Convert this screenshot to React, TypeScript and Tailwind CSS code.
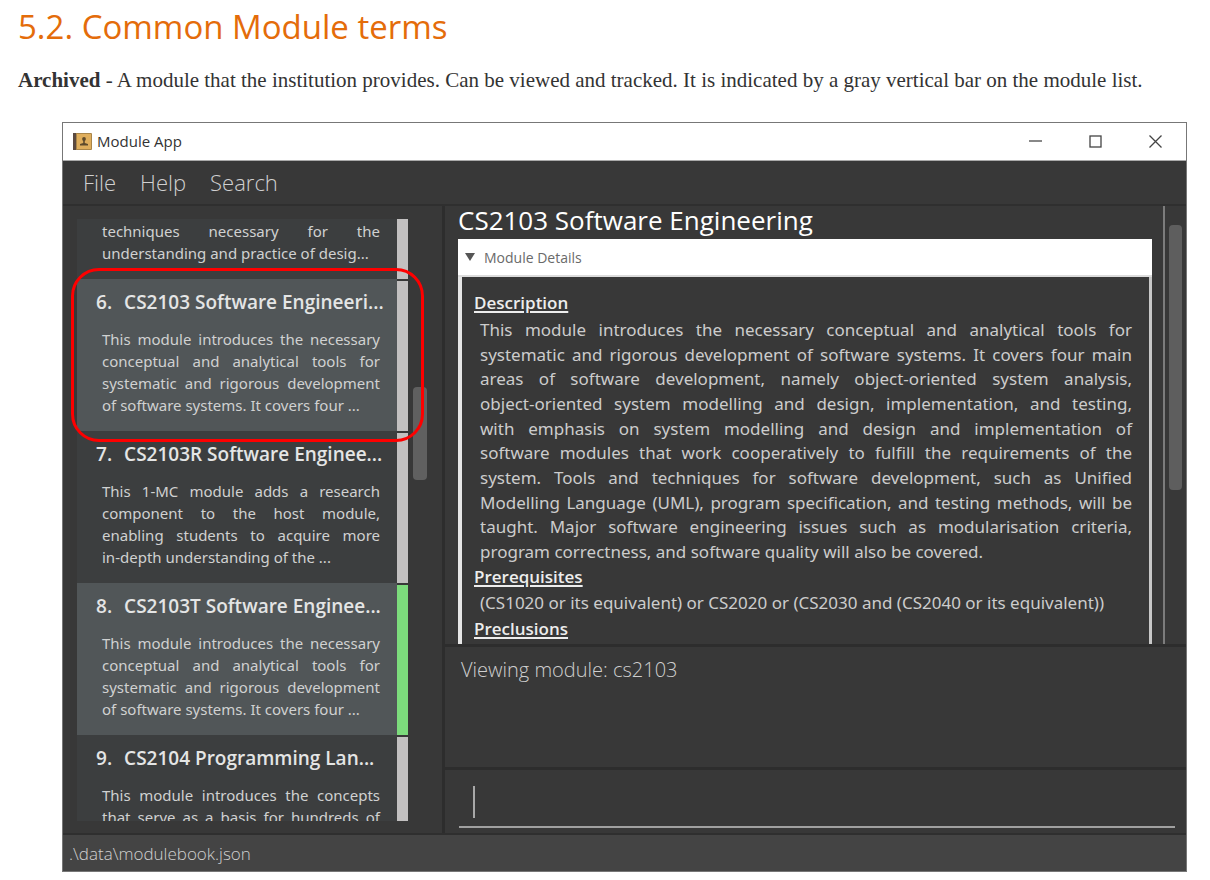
type Module = { index: number; title: string; lines: string[]; tracked?: boolean };

const modules: Module[] = [
  {
    index: 6,
    title: "CS2103 Software Engineeri...",
    lines: [
      "This module introduces the necessary",
      "conceptual and analytical tools for",
      "systematic and rigorous development",
      "of software systems. It covers four ...",
    ],
  },
  {
    index: 7,
    title: "CS2103R Software Enginee...",
    lines: [
      "This 1-MC module adds a research",
      "component to the host module,",
      "enabling students to acquire more",
      "in-depth understanding of the ...",
    ],
  },
  {
    index: 8,
    title: "CS2103T Software Enginee...",
    tracked: true,
    lines: [
      "This module introduces the necessary",
      "conceptual and analytical tools for",
      "systematic and rigorous development",
      "of software systems. It covers four ...",
    ],
  },
  {
    index: 9,
    title: "CS2104 Programming Lan...",
    lines: ["This module introduces the concepts", "that serve as a basis for hundreds of"],
  },
];

const description = [
  "This module introduces the necessary conceptual and analytical tools for",
  "systematic and rigorous development of software systems. It covers four main",
  "areas of software development, namely object-oriented system analysis,",
  "object-oriented system modelling and design, implementation, and testing,",
  "with emphasis on system modelling and design and implementation of",
  "software modules that work cooperatively to fulfill the requirements of the",
  "system. Tools and techniques for software development, such as Unified",
  "Modelling Language (UML), program specification, and testing methods, will be",
  "taught. Major software engineering issues such as modularisation criteria,",
  "program correctness, and software quality will also be covered.",
];

function Line({ text, justified }: { text: string; justified: boolean }) {
  return (
    <span className={justified ? "block whitespace-nowrap [text-align-last:justify]" : "block whitespace-nowrap"}>
      {text}
    </span>
  );
}

function CardText({ lines, lastJustified = false }: { lines: string[]; lastJustified?: boolean }) {
  return (
    <p className="pr-[17px] pl-[25px] font-['Noto_Sans',sans-serif] text-[15px] leading-[22px] text-[#d0d1d1]">
      {lines.map((line, i) => (
        <Line key={line} text={line} justified={lastJustified || i < lines.length - 1} />
      ))}
    </p>
  );
}

function ModuleCard({ module }: { module: Module }) {
  const even = module.index % 2 === 0;
  return (
    <li className="flex h-[152px] shrink-0">
      <div className={even ? "min-w-0 flex-1 bg-[#515658] pt-[11px]" : "min-w-0 flex-1 bg-[#3c3e3f] pt-[11px]"}>
        <h3 className="flex gap-3 pl-[19px] text-[19px] leading-6 font-semibold whitespace-nowrap text-[#e4e5e5]">
          <span>{module.index}.</span>
          <span>{module.title}</span>
        </h3>
        <div className="pt-3.5">
          <CardText lines={module.lines} lastJustified={module.lines.length < 4} />
        </div>
      </div>
      <div className={module.tracked ? "mt-0.5 w-[11px] bg-[#7cdb7c]" : "mt-0.5 w-[11px] bg-[#c2c0c0]"} />
    </li>
  );
}

function AppIcon() {
  return (
    <svg viewBox="0 0 19 17" className="h-[17px] w-[19px]" aria-hidden="true">
      <rect width="19" height="17" rx="1" fill="#a98549" />
      <rect x="4" y="1" width="14" height="15" fill="#dfae5d" />
      <rect width="3" height="17" fill="#5b4a40" />
      <circle cx="11" cy="6" r="1.9" fill="#5e4a2c" />
      <path d="M10.200 7h1.600v3l3.200 1V12.500H7v-1.500l3.200-1z" fill="#5e4a2c" />
    </svg>
  );
}

function ListPane() {
  return (
    <aside className="flex w-[379px] shrink-0 gap-[5px] pt-[13px] pb-3 pl-[14px]">
      <div className="relative w-[331px]">
        <ul className="flex h-[602px] flex-col overflow-hidden">
          <li className="flex h-[60px] shrink-0">
            <div className="min-w-0 flex-1 bg-[#3c3e3f] pt-px">
              <CardText lines={["techniques necessary for the", "understanding and practice of desig..."]} />
            </div>
            <div className="w-[11px] bg-[#c2c0c0]" />
          </li>
          {modules.map((m) => (
            <ModuleCard key={m.index} module={m} />
          ))}
        </ul>
        <div className="pointer-events-none absolute top-[49px] -right-4 -left-1.5 h-[174px] rounded-[28px] border-[3px] border-[#fe0000]" />
      </div>
      <div className="pt-[168px]">
        <div className="h-[93px] w-[14px] rounded-[4px] bg-[#606060]" />
      </div>
    </aside>
  );
}

function SectionHeading({ children }: { children: string }) {
  return (
    <h4 className="text-[17px] leading-[26px] font-semibold text-[#ededed] underline decoration-2 underline-offset-2">
      {children}
    </h4>
  );
}

function DetailsPane() {
  return (
    <section className="flex h-[438px] gap-1 pr-1 pl-[13px]">
      <div className="min-w-0 flex-1 border-r-2 border-[#7c7c7c] pr-[11px]">
        <h2 className="pb-[5px] text-[26px] leading-7 font-medium text-white">CS2103 Software Engineering</h2>
        <button
          type="button"
          className="flex h-[38px] w-full items-center gap-[9px] border-b-2 border-[#dcdcdc] bg-white pl-[7px] text-[14px] text-[#6a6a6a]"
        >
          <svg viewBox="0 0 10 8" className="h-2 w-[10px]" aria-hidden="true">
            <path d="M0 0h10L5 8z" fill="#555" />
          </svg>
          Module Details
        </button>
        <div className="h-[367px] overflow-hidden border-r-[3px] border-l-4 border-r-[#c8c8c8] border-l-[#e6e6e6] pt-[13px] pr-[17px] pl-3">
          <SectionHeading>Description</SectionHeading>
          <p className="flex h-[248px] flex-col justify-between pt-0.5 pl-1.5 font-['Noto_Sans',sans-serif] text-[17px] leading-6 text-[#cccccc]">
            {description.map((line, i) => (
              <Line key={line} text={line} justified={i < description.length - 1} />
            ))}
          </p>
          <SectionHeading>Prerequisites</SectionHeading>
          <p className="pl-1.5 font-['Noto_Sans',sans-serif] text-[17px] leading-[26px] whitespace-nowrap text-[#cccccc]">
            (CS1020 or its equivalent) or CS2020 or (CS2030 and (CS2040 or its equivalent))
          </p>
          <SectionHeading>Preclusions</SectionHeading>
        </div>
      </div>
      <div className="pt-[19px]">
        <div className="h-[265px] w-[13px] rounded-[4px] bg-[#5e5e5e]" />
      </div>
    </section>
  );
}

export default function App() {
  return (
    <main className="min-h-screen bg-white pb-2 font-['Open_Sans',sans-serif]">
      <header className="px-[18px]">
        <h1 className="pt-1 text-[33px] leading-[46px] text-[#e46c0a]">5.2. Common Module terms</h1>
        <p className="pt-[17px] font-['Liberation_Serif',serif] text-[21px] leading-[27px] text-[#333]">
          <strong>Archived</strong> - A module that the institution provides. Can be viewed and tracked. It is
          indicated by a gray vertical bar on the module list.
        </p>
      </header>

      <div className="mt-7 mr-[23px] ml-[62px] border border-[#777] bg-[#383838]">
        <div className="flex h-[38px] items-center gap-[5px] border-b border-[#aaa] bg-white pl-[10px]">
          <AppIcon />
          <span className="flex-1 text-[15px] text-[#333]">Module App</span>
          <div className="flex pr-[1px] text-[#444]">
            <button type="button" aria-label="Minimize" className="flex h-9 w-[59px] items-center justify-center">
              <svg viewBox="0 0 13 13" className="size-[13px]"><path d="M0 6h13" stroke="#888" strokeWidth="2" /></svg>
            </button>
            <button type="button" aria-label="Maximize" className="flex h-9 w-[60px] items-center justify-center">
              <svg viewBox="0 0 13 13" className="size-[13px]" fill="none"><rect x="1" y="1" width="11" height="11" stroke="#444" strokeWidth="1.300" /></svg>
            </button>
            <button type="button" aria-label="Close" className="flex h-9 w-[60px] items-center justify-center">
              <svg viewBox="0 0 13 13" className="size-[13px]"><path d="M.5.5l12 12M12.500.5l-12 12" stroke="#444" strokeWidth="1.300" /></svg>
            </button>
          </div>
        </div>

        <nav className="flex h-[43px] items-center gap-6 pl-5 text-[22px] font-light text-[#d0d0d0]">
          <button type="button">File</button>
          <button type="button">Help</button>
          <button type="button">Search</button>
        </nav>

        <div className="flex border-y-2 border-[#2f2f2f]">
          <ListPane />
          <div className="min-w-0 flex-1 border-l-[3px] border-[#2d2d2d]">
            <DetailsPane />
            <div className="h-[126px] border-y-[3px] border-[#2d2d2d] px-4 pt-[7px] text-[20px] leading-8 font-light text-[#cfcfcf]">
              Viewing module: cs2103
            </div>
            <div className="pt-3 pr-[11px] pl-[14px]">
              <label className="flex h-[46px] items-start border-b-2 border-[#a0a0a0] pl-[14px]">
                <span className="mt-1 h-8 w-0.5 bg-[#a8a8a8]" />
                <input
                  aria-label="Command"
                  className="min-w-0 flex-1 bg-transparent px-2 text-[20px] text-white outline-none"
                />
              </label>
            </div>
          </div>
        </div>

        <footer className="h-9 bg-[#444] pt-px pl-1.5 text-[17px] leading-9 font-light text-[#d0d0d0]">
          .\data\modulebook.json
        </footer>
      </div>
    </main>
  );
}
